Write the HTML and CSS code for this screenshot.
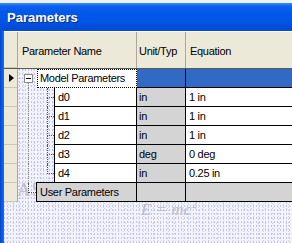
FILE: index.html
```html
<!DOCTYPE html>
<html>
<head>
<meta charset="utf-8">
<link rel="stylesheet" href="styles.css">
</head>
<body>
<div class="wm wm-as">AS</div>
<div class="wm wm-emc">E = mc<span class="sq">2</span></div>
<div class="topstrip"></div>
<div class="window">
  <div class="titlebar">Parameters</div>
  <div class="main">
    <div class="frame-l"></div>
    <div class="grid">
      <div class="hdr">
        <div class="rh"></div>
        <div class="h-name">Parameter Name</div>
        <div class="h-unit">Unit/Typ</div>
        <div class="h-eq">Equation</div>
      </div>

      <div class="row sel">
        <div class="rh"><span class="arrow"></span></div>
        <div class="name">
          <div class="ind ind-root">
            <div class="stem"><span class="box"><span class="minus"></span></span><span class="stem-line"></span></div>
          </div>
          <div class="cell c-focus">Model Parameters</div>
        </div>
        <div class="cell unit blue"></div>
        <div class="cell eq blue"></div>
      </div>

      <div class="row">
        <div class="rh"></div>
        <div class="name">
          <div class="ind ind-child"><span class="sp10"></span><span class="vline"></span><span class="elbow"><span class="e-top"></span><span class="e-bot"></span></span></div>
          <div class="cell c-child">d0</div>
        </div>
        <div class="cell unit gray">in</div>
        <div class="cell eq">1 in</div>
      </div>

      <div class="row">
        <div class="rh"></div>
        <div class="name">
          <div class="ind ind-child"><span class="sp10"></span><span class="vline"></span><span class="elbow"><span class="e-top"></span><span class="e-bot"></span></span></div>
          <div class="cell c-child">d1</div>
        </div>
        <div class="cell unit gray">in</div>
        <div class="cell eq">1 in</div>
      </div>

      <div class="row">
        <div class="rh"></div>
        <div class="name">
          <div class="ind ind-child"><span class="sp10"></span><span class="vline"></span><span class="elbow"><span class="e-top"></span><span class="e-bot"></span></span></div>
          <div class="cell c-child">d2</div>
        </div>
        <div class="cell unit gray">in</div>
        <div class="cell eq">1 in</div>
      </div>

      <div class="row">
        <div class="rh"></div>
        <div class="name">
          <div class="ind ind-child"><span class="sp10"></span><span class="vline"></span><span class="elbow"><span class="e-top"></span><span class="e-bot"></span></span></div>
          <div class="cell c-child">d3</div>
        </div>
        <div class="cell unit gray">deg</div>
        <div class="cell eq">0 deg</div>
      </div>

      <div class="row">
        <div class="rh"></div>
        <div class="name">
          <div class="ind ind-child"><span class="sp10"></span><span class="vline"></span><span class="elbow"><span class="e-top"></span><span class="e-bot last"></span></span></div>
          <div class="cell c-child">d4</div>
        </div>
        <div class="cell unit gray">in</div>
        <div class="cell eq">0.25 in</div>
      </div>

      <div class="row user">
        <div class="rh"></div>
        <div class="name">
          <div class="ind ind-user"><span class="sp10"></span><span class="elbow w8"><span class="e-top"></span><span class="e-bot last"></span></span></div>
          <div class="cell c-user">User Parameters</div>
        </div>
        <div class="cell unit gray"></div>
        <div class="cell eq gray"></div>
      </div>
    </div>
  </div>
</div>
</body>
</html>
```

FILE: styles.css
```css
* { box-sizing: border-box; }

html, body {
  margin: 0;
  padding: 0;
}

body {
  width: 292px;
  height: 243px;
  overflow: hidden;
  position: relative;
  font-family: "Liberation Sans", Arial, sans-serif;
  font-size: 11px;
  color: #000;
  background-color: #f3f3fb;
  background-image:
    radial-gradient(circle, #c4c4ea 0.7px, transparent 0.9px),
    radial-gradient(circle, #d0d0f0 0.7px, transparent 0.9px),
    radial-gradient(circle, #c8c8e8 0.6px, transparent 0.8px);
  background-size: 3px 4px, 5px 3px, 7px 5px;
  background-position: 0 0, 1px 2px, 3px 1px;
}

.wm {
  position: absolute;
  font-family: "Liberation Serif", "DejaVu Serif", serif;
  color: #bcbccc;
  z-index: 0;
}

.wm-as {
  left: 17px;
  top: 179px;
  font-size: 19px;
  letter-spacing: 1px;
}

.wm-emc {
  left: 141px;
  top: 199px;
  font-size: 17px;
  font-style: italic;
}

.sq {
  font-size: 10px;
  vertical-align: 7px;
  margin-left: 1px;
}

.topstrip {
  height: 3px;
  background: #eef0f3;
  position: relative;
  z-index: 1;
}

.window {
  position: relative;
  z-index: 1;
  display: flex;
  flex-direction: column;
  height: 240px;
}

.titlebar {
  height: 28px;
  padding: 7px 0 0 7px;
  font-weight: bold;
  font-size: 13px;
  color: #fff;
  text-shadow: 1px 1px 0 #0a2a8a;
  background: linear-gradient(#3b8ff7 0px, #0c61ef 3px, #0058ea 10px, #0054e3 20px, #004bd6 26px, #0a4fd0 28px);
}

.main {
  flex: 1;
  display: flex;
}

.frame-l {
  width: 4px;
  background: linear-gradient(to right, #0046d2, #0a5eea 60%, #1c6cf0);
}

.grid {
  flex: 1;
  display: flex;
  flex-direction: column;
}

.hdr {
  height: 38px;
  display: flex;
  background: #ece9d8;
  border-top: 1px solid #fff;
  border-bottom: 1px solid #5c5a50;
}

.hdr > div {
  line-height: 36px;
  padding-top: 1px;
  white-space: nowrap;
  overflow: hidden;
}

.hdr .rh {
  width: 14px;
  border-right: 1px solid #aca899;
  background: #ece9d8;
}

.h-name {
  width: 119px;
  padding-left: 4px;
  border-right: 1px solid #aca899;
  letter-spacing: -0.3px;
}

.h-unit {
  width: 49px;
  padding-left: 2px;
  border-right: 1px solid #aca899;
  letter-spacing: -0.3px;
}

.h-eq {
  flex: 1;
  padding-left: 4px;
  letter-spacing: -0.3px;
}

.row {
  height: 19px;
  display: flex;
}

.rh {
  width: 14px;
  background: #ece9d8;
  border-right: 1px solid #aca899;
  border-bottom: 1px solid #cbc7b8;
  display: flex;
  align-items: center;
  padding-left: 5px;
}

.arrow {
  width: 0;
  height: 0;
  border-left: 5px solid #000;
  border-top: 4.5px solid transparent;
  border-bottom: 4.5px solid transparent;
}

.name {
  width: 119px;
  display: flex;
}

.ind {
  display: flex;
  height: 19px;
}

.ind-root { width: 19px; padding-left: 6px; }
.ind-child { width: 36px; }
.ind-user { width: 18px; }

.stem {
  width: 9px;
  display: flex;
  flex-direction: column;
  padding-top: 5px;
}

.box {
  width: 9px;
  height: 9px;
  border: 1px solid #8c8c8c;
  background: #fff;
  display: flex;
  align-items: center;
  justify-content: center;
}

.minus {
  width: 5px;
  height: 1px;
  background: #000;
}

.stem-line {
  flex: 1;
  margin-left: 4px;
  border-left: 1px dotted #8a8a8a;
}

.sp10 { width: 10px; }

.vline {
  width: 19px;
  border-left: 1px dotted #8a8a8a;
}

.elbow {
  width: 7px;
  display: flex;
  flex-direction: column;
}

.elbow.w8 { width: 8px; }

.e-top {
  height: 10px;
  border-left: 1px dotted #555;
  border-bottom: 1px dotted #555;
}

.e-bot {
  flex: 1;
  border-left: 1px dotted #555;
}

.e-bot.last { border-left: none; }

.cell {
  height: 19px;
  line-height: 18px;
  white-space: nowrap;
  overflow: hidden;
  letter-spacing: -0.3px;
  border-bottom: 1px solid #000;
}

.c-focus {
  width: 100px;
  background: #fff;
  border: 1px dotted #000;
  padding-left: 2px;
  line-height: 17px;
}

.c-child {
  flex: 1;
  background: #fff;
  border-left: 1px solid #000;
  border-right: 1px solid #000;
  padding-left: 3px;
}

.c-user {
  flex: 1;
  background: #d4d4d4;
  border-left: 1px solid #000;
  border-right: 1px solid #000;
  box-shadow: 0 -1px 0 #000;
  padding-left: 3px;
}

.unit {
  width: 49px;
  border-right: 1px solid #000;
  padding-left: 2px;
}

.eq {
  flex: 1;
  background: #fff;
  padding-left: 3px;
}

.blue { background: #316ac5; }
.gray { background: #d4d4d4; }
```
